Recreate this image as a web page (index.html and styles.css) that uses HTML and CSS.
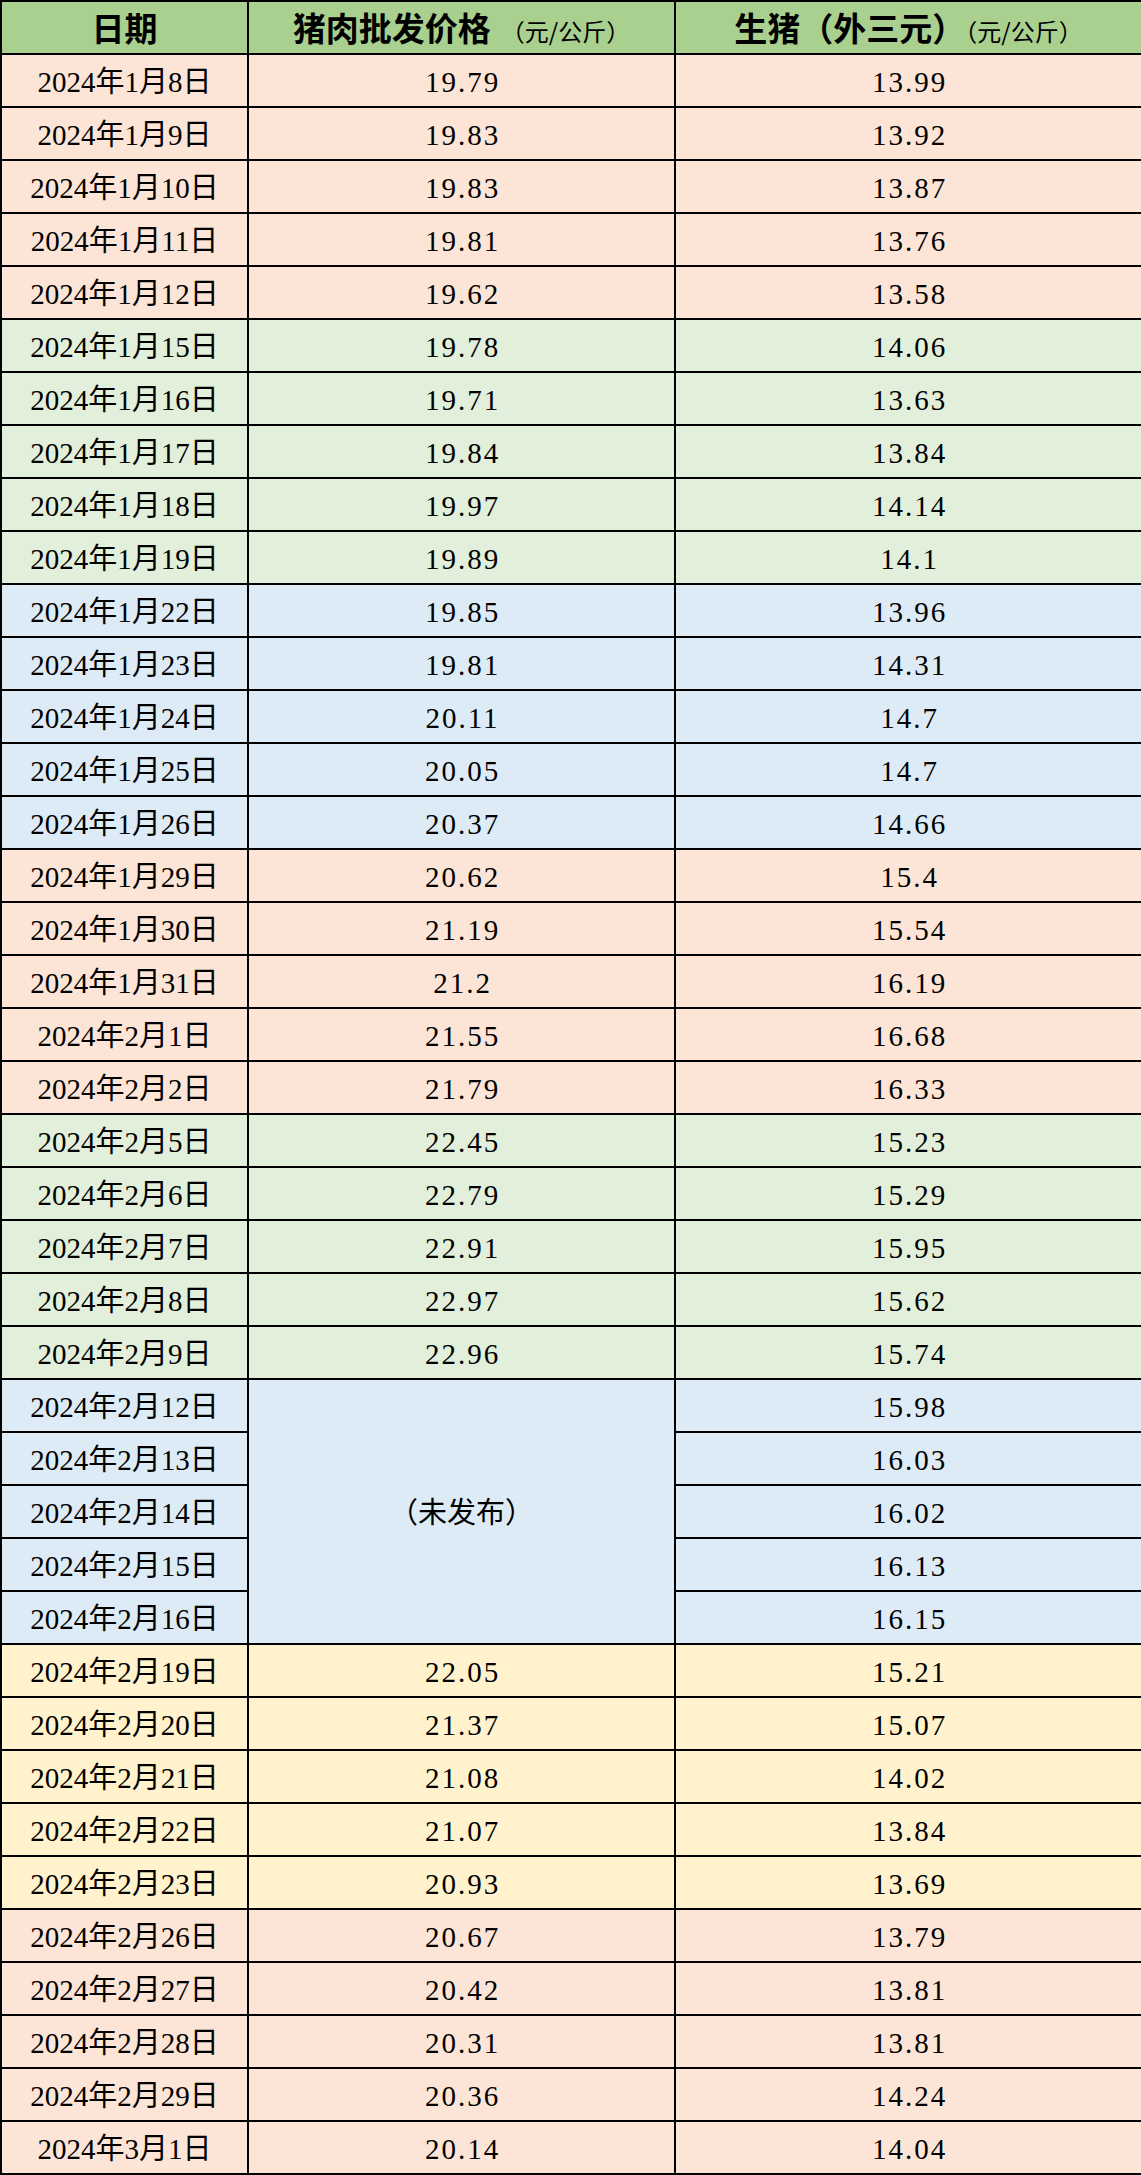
FILE: index.html
```html
<!DOCTYPE html>
<html lang="zh-CN">
<head>
<meta charset="utf-8">
<title>猪肉批发价格</title>
<link rel="stylesheet" href="styles.css">
</head>
<body>
<table class="price-table">
  <colgroup>
    <col class="c-date">
    <col class="c-pork">
    <col class="c-hog">
  </colgroup>
  <thead>
    <tr class="head">
      <th>日期</th>
      <th>猪肉批发价格<span class="unit gap">（元/公斤）</span></th>
      <th>生猪（外三元）<span class="unit">（元/公斤）</span></th>
    </tr>
  </thead>
  <tbody>
    <tr class="pink"><td>2024年1月8日</td><td class="num">19.79</td><td class="num">13.99</td></tr>
    <tr class="pink"><td>2024年1月9日</td><td class="num">19.83</td><td class="num">13.92</td></tr>
    <tr class="pink"><td>2024年1月10日</td><td class="num">19.83</td><td class="num">13.87</td></tr>
    <tr class="pink"><td>2024年1月11日</td><td class="num">19.81</td><td class="num">13.76</td></tr>
    <tr class="pink"><td>2024年1月12日</td><td class="num">19.62</td><td class="num">13.58</td></tr>
    <tr class="green"><td>2024年1月15日</td><td class="num">19.78</td><td class="num">14.06</td></tr>
    <tr class="green"><td>2024年1月16日</td><td class="num">19.71</td><td class="num">13.63</td></tr>
    <tr class="green"><td>2024年1月17日</td><td class="num">19.84</td><td class="num">13.84</td></tr>
    <tr class="green"><td>2024年1月18日</td><td class="num">19.97</td><td class="num">14.14</td></tr>
    <tr class="green"><td>2024年1月19日</td><td class="num">19.89</td><td class="num">14.1</td></tr>
    <tr class="blue"><td>2024年1月22日</td><td class="num">19.85</td><td class="num">13.96</td></tr>
    <tr class="blue"><td>2024年1月23日</td><td class="num">19.81</td><td class="num">14.31</td></tr>
    <tr class="blue"><td>2024年1月24日</td><td class="num">20.11</td><td class="num">14.7</td></tr>
    <tr class="blue"><td>2024年1月25日</td><td class="num">20.05</td><td class="num">14.7</td></tr>
    <tr class="blue"><td>2024年1月26日</td><td class="num">20.37</td><td class="num">14.66</td></tr>
    <tr class="pink"><td>2024年1月29日</td><td class="num">20.62</td><td class="num">15.4</td></tr>
    <tr class="pink"><td>2024年1月30日</td><td class="num">21.19</td><td class="num">15.54</td></tr>
    <tr class="pink"><td>2024年1月31日</td><td class="num">21.2</td><td class="num">16.19</td></tr>
    <tr class="pink"><td>2024年2月1日</td><td class="num">21.55</td><td class="num">16.68</td></tr>
    <tr class="pink"><td>2024年2月2日</td><td class="num">21.79</td><td class="num">16.33</td></tr>
    <tr class="green"><td>2024年2月5日</td><td class="num">22.45</td><td class="num">15.23</td></tr>
    <tr class="green"><td>2024年2月6日</td><td class="num">22.79</td><td class="num">15.29</td></tr>
    <tr class="green"><td>2024年2月7日</td><td class="num">22.91</td><td class="num">15.95</td></tr>
    <tr class="green"><td>2024年2月8日</td><td class="num">22.97</td><td class="num">15.62</td></tr>
    <tr class="green"><td>2024年2月9日</td><td class="num">22.96</td><td class="num">15.74</td></tr>
    <tr class="blue"><td>2024年2月12日</td><td rowspan="5">（未发布）</td><td class="num">15.98</td></tr>
    <tr class="blue"><td>2024年2月13日</td><td class="num">16.03</td></tr>
    <tr class="blue"><td>2024年2月14日</td><td class="num">16.02</td></tr>
    <tr class="blue"><td>2024年2月15日</td><td class="num">16.13</td></tr>
    <tr class="blue"><td>2024年2月16日</td><td class="num">16.15</td></tr>
    <tr class="yellow"><td>2024年2月19日</td><td class="num">22.05</td><td class="num">15.21</td></tr>
    <tr class="yellow"><td>2024年2月20日</td><td class="num">21.37</td><td class="num">15.07</td></tr>
    <tr class="yellow"><td>2024年2月21日</td><td class="num">21.08</td><td class="num">14.02</td></tr>
    <tr class="yellow"><td>2024年2月22日</td><td class="num">21.07</td><td class="num">13.84</td></tr>
    <tr class="yellow"><td>2024年2月23日</td><td class="num">20.93</td><td class="num">13.69</td></tr>
    <tr class="pink"><td>2024年2月26日</td><td class="num">20.67</td><td class="num">13.79</td></tr>
    <tr class="pink"><td>2024年2月27日</td><td class="num">20.42</td><td class="num">13.81</td></tr>
    <tr class="pink"><td>2024年2月28日</td><td class="num">20.31</td><td class="num">13.81</td></tr>
    <tr class="pink"><td>2024年2月29日</td><td class="num">20.36</td><td class="num">14.24</td></tr>
    <tr class="pink"><td>2024年3月1日</td><td class="num">20.14</td><td class="num">14.04</td></tr>
  </tbody>
</table>
</body>
</html>
```

FILE: styles.css
```css
html, body {
  margin: 0;
  padding: 0;
  background: #ffffff;
}

.price-table {
  width: 1141px;
  border-collapse: collapse;
  table-layout: fixed;
  font-family: "Liberation Serif", "Noto Sans CJK SC", serif;
  color: #000000;
}

.c-date { width: 247px; }
.c-pork { width: 427px; }
.c-hog { width: 467px; }

.price-table th,
.price-table td {
  border: 2px solid #000000;
  height: 51px;
  padding: 0;
  text-align: center;
  vertical-align: middle;
  white-space: nowrap;
}

.price-table td {
  font-size: 29px;
  line-height: 1;
  padding-top: 4px;
  height: 47px;
}

.price-table td.num {
  letter-spacing: 2px;
  padding-left: 2px;
}

.head th {
  background: #a9d08e;
  font-family: "Noto Sans CJK SC", sans-serif;
  font-size: 33px;
  font-weight: 700;
  line-height: 1;
}

.unit {
  font-size: 24px;
  font-weight: 400;
}

.unit.gap {
  margin-left: 10px;
}

.pink td { background: #fce4d6; }
.green td { background: #e2efda; }
.blue td { background: #ddebf7; }
.yellow td { background: #fff2cc; }
```
